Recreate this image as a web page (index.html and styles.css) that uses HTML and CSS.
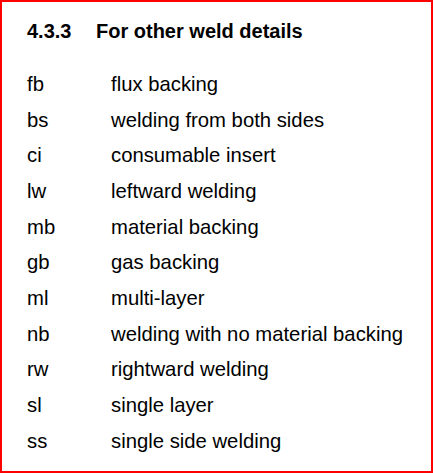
FILE: index.html
```html
<!DOCTYPE html>
<html>
<head>
<meta charset="utf-8">
<link rel="stylesheet" href="styles.css">
</head>
<body>
<div class="frame">
  <h2 class="heading"><span class="num">4.3.3</span><span class="title">For other weld details</span></h2>
  <dl class="terms">
    <dt>fb</dt><dd>flux backing</dd>
    <dt>bs</dt><dd>welding from both sides</dd>
    <dt>ci</dt><dd>consumable insert</dd>
    <dt>lw</dt><dd>leftward welding</dd>
    <dt>mb</dt><dd>material backing</dd>
    <dt>gb</dt><dd>gas backing</dd>
    <dt>ml</dt><dd>multi-layer</dd>
    <dt>nb</dt><dd>welding with no material backing</dd>
    <dt>rw</dt><dd>rightward welding</dd>
    <dt>sl</dt><dd>single layer</dd>
    <dt>ss</dt><dd>single side welding</dd>
  </dl>
</div>
</body>
</html>
```
FILE: styles.css
```css
html, body {
  margin: 0;
  padding: 0;
  background: #ffffff;
}
body {
  font-family: "Liberation Sans", Arial, sans-serif;
  color: #000000;
}
.frame {
  box-sizing: border-box;
  width: 433px;
  height: 473px;
  border: 2px solid #ff0000;
  padding: 18px 0 0 25px;
}
.heading {
  margin: 0;
  font-size: 20px;
  font-weight: bold;
  line-height: 23px;
  display: flex;
}
.heading .num {
  width: 69px;
}
.terms {
  margin: 24px 0 0 0;
  display: grid;
  grid-template-columns: 84px 1fr;
  font-size: 20.3px;
  line-height: 35.67px;
}
.terms dt, .terms dd {
  margin: 0;
}
```
